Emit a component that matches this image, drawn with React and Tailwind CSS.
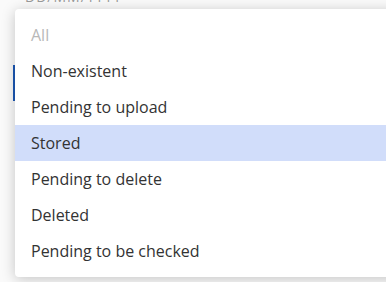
import React from "react";

const options = [
  { label: "All", muted: true },
  { label: "Non-existent" },
  { label: "Pending to upload" },
  { label: "Stored", active: true },
  { label: "Pending to delete" },
  { label: "Deleted" },
  { label: "Pending to be checked" },
];

export default function App() {
  return (
    <div
      className="relative w-[386px] h-[282px] overflow-hidden bg-[#fafafa]"
      style={{ fontFamily: '"Open Sans", "Noto Sans", sans-serif' }}
    >
      {/* page behind the menu */}
      <div className="absolute left-[25px] top-[-10px] text-[14px] leading-[14px] tracking-[1px] text-[#9a9a9a]">
        DD/MM/YYYY
      </div>
      <div className="absolute left-[13px] top-[65px] w-[2px] h-[36px] bg-[#1b57b5]" />

      {/* dropdown */}
      <ul className="absolute left-[15px] top-[9px] w-[420px] rounded-[4px] bg-white py-2 shadow-[0_2px_14px_rgba(0,0,0,0.22)]">
        {options.map((o) => (
          <li
            key={o.label}
            className={`h-9 flex items-center pl-4 text-[16px] ${
              o.active ? "bg-[#d1ddfa]" : ""
            } ${o.muted ? "text-[#b8b8b8]" : "text-[#333333]"}`}
          >
            {o.label}
          </li>
        ))}
      </ul>
    </div>
  );
}
